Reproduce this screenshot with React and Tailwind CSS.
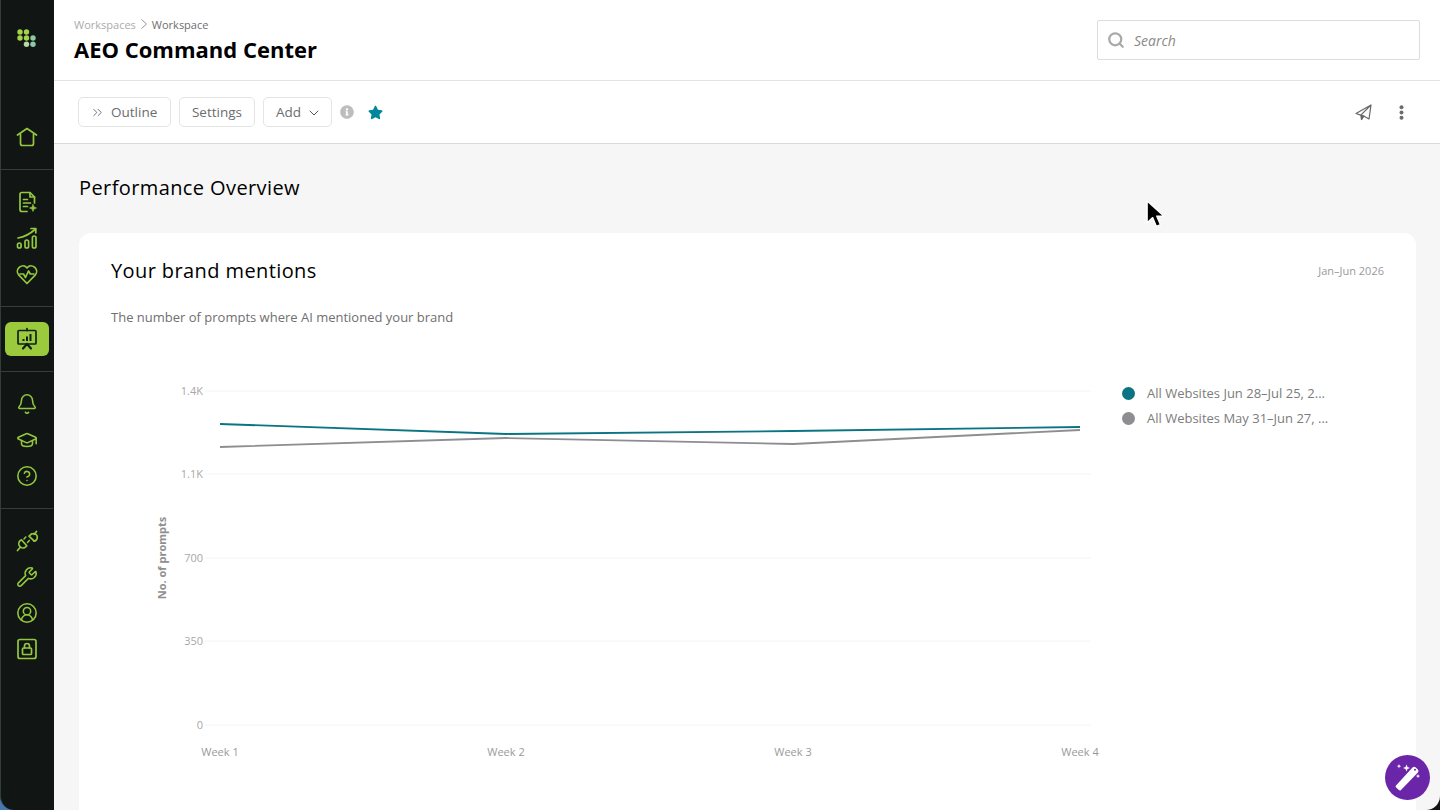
import React from 'react';
import {
  Bell,
  ChevronDown,
  ChevronsRight,
  CircleHelp,
  CircleUserRound,
  GraduationCap,
  Search,
  Wrench,
} from 'lucide-react';
import { FaInfoCircle, FaStar } from 'react-icons/fa';

const iconProps = { size: 22, strokeWidth: 1.7 };

function Glyph({ children, className = 'text-[#93c83e]' }) {
  return (
    <svg width="24" height="24" viewBox="0 0 24 24" fill="none" stroke="currentColor" strokeWidth="1.7" strokeLinecap="round" strokeLinejoin="round" className={className}>
      {children}
    </svg>
  );
}

function Logo() {
  const dots = [
    [5, 6, '#a6d14b'], [11.5, 6, '#a6d14b'],
    [5, 12, '#a6d14b'], [11.5, 12, '#a6d14b'], [18, 12, '#8ecaa0'],
    [11.5, 18.2, '#b5dca0'], [18, 18.2, '#8ecaa8'],
  ];
  return (
    <svg width="24" height="24" viewBox="0 0 24 24">
      {dots.map(([cx, cy, fill], idx) => (
        <circle key={idx} cx={cx} cy={cy} r="2.7" fill={fill} />
      ))}
    </svg>
  );
}

const HomeIcon = () => (
  <Glyph>
    <path d="M2.5 10 12 3.5 21.5 10" />
    <path d="M5.5 9v9.5a2 2 0 0 0 2 2h9a2 2 0 0 0 2-2V9" />
  </Glyph>
);

const ReportIcon = () => (
  <Glyph>
    <path d="M12 21.5H7a2 2 0 0 1-2-2v-15a2 2 0 0 1 2-2h8l4.5 4.5V13" />
    <path d="M15 2.5V7h4.5" />
    <path d="M8.5 9.5h4M8.5 13h7M8.5 16.5h4" />
    <path d="M18 14.5l1 2.5 2.5 1-2.5 1-1 2.5-1-2.5-2.5-1 2.5-1z" fill="currentColor" strokeWidth="0.6" />
  </Glyph>
);

const GrowthIcon = () => (
  <Glyph>
    <path d="M3 12c6-1 12-4 17.5-9" />
    <path d="M16 2.5h4.8v4.3" />
    <rect x="2.5" y="17" width="3.6" height="5" rx="1.8" />
    <rect x="10" y="14" width="3.6" height="8" rx="1.8" />
    <rect x="17.4" y="10" width="3.6" height="12" rx="1.8" />
  </Glyph>
);

const HeartIcon = () => (
  <Glyph>
    <path d="M12 21.5 3.6 12.8a5.4 5.4 0 0 1 7.6-7.6l.8.8.8-.8a5.4 5.4 0 0 1 7.6 7.6z" />
    <path d="M5 12h3.5l2 3.5 3-6.5 1.8 3H19" />
  </Glyph>
);

const BoardIcon = () => (
  <Glyph className="text-[#10201a]">
    <path d="M12 1.5v2" />
    <rect x="3" y="3.5" width="18" height="13.5" rx="1" />
    <path d="M12 17l-4 4.5M12 17l4 4.5" strokeWidth="2.2" />
    <path d="M8.5 14v-2M12 14V9.5M15.5 14V7" strokeWidth="2" strokeLinecap="butt" />
  </Glyph>
);

const PlugIcon = () => (
  <Glyph>
    <path d="M5.2 11.6a3.8 3.8 0 0 0 5.6 6.2l1-1.1-5.4-5.9z" />
    <path d="M18.8 12.2a3.8 3.8 0 0 0-.6-7.6 3.8 3.8 0 0 0-2.8 1.2l-1.4 1.3 5.3 5z" />
    <path d="M2.5 21.5l2.8-3.2M21.5 2.5l-2.4 2.8" />
    <path d="M9 10l1.8-2M12.5 13.4l1.8-2" strokeWidth="1.5" />
  </Glyph>
);

const LockIcon = () => (
  <Glyph>
    <rect x="3" y="2.5" width="18" height="19" rx="2" />
    <rect x="7.5" y="11" width="9" height="6.5" rx="1" />
    <path d="M9.5 11V9a2.5 2.5 0 0 1 5 0v2" />
  </Glyph>
);

function NavGroup({ children }) {
  return <div className="py-[14px] border-b border-[#343e3c]">{children}</div>;
}

function NavItem({ children, active }) {
  return (
    <div className="h-9 flex items-center justify-center text-[#93c83e]">
      {active ? (
        <div className="w-11 h-[34px] rounded-md bg-[#9bcb3c] flex items-center justify-center">{children}</div>
      ) : (
        children
      )}
    </div>
  );
}

function Sidebar() {
  return (
    <aside className="w-[54px] shrink-0 h-full bg-[#111614] border-l border-[#333c3c] pr-px rounded-bl-[14px]">
      <div className="pt-5 pb-[14px] border-b border-[#343e3c]">
        <NavItem><Logo /></NavItem>
        <div className="mt-[63px]">
          <NavItem><HomeIcon /></NavItem>
        </div>
      </div>
      <NavGroup>
        <NavItem><ReportIcon /></NavItem>
        <NavItem><GrowthIcon /></NavItem>
        <NavItem><HeartIcon /></NavItem>
      </NavGroup>
      <NavGroup>
        <NavItem active><BoardIcon /></NavItem>
      </NavGroup>
      <NavGroup>
        <NavItem><Bell {...iconProps} /></NavItem>
        <NavItem><GraduationCap {...iconProps} /></NavItem>
        <NavItem><CircleHelp {...iconProps} /></NavItem>
      </NavGroup>
      <div className="pt-[14px]">
        <NavItem><PlugIcon /></NavItem>
        <NavItem><Wrench {...iconProps} /></NavItem>
        <NavItem><CircleUserRound {...iconProps} /></NavItem>
        <NavItem><LockIcon /></NavItem>
      </div>
    </aside>
  );
}

function Button({ children, className = '' }) {
  return (
    <button className={`h-[30px] pt-px rounded-[5px] border border-[#e3e4e4] bg-white flex items-center text-[13.5px] font-medium text-[#6a6d6d] ${className}`}>
      {children}
    </button>
  );
}

function Header() {
  return (
    <>
      <header className="h-[81px] shrink-0 bg-white border-b border-[#e2e3e3] pl-5 pr-5 flex items-center justify-between">
        <div>
          <div className="flex items-center text-[11px] leading-[15px] text-[#ababab]">
            Workspaces
            <svg width="10" height="10" viewBox="0 0 10 10" fill="none" stroke="#8a8a8a" strokeWidth="0.9" className="mx-[3px]">
              <path d="M2.5 0.5 7.5 5l-5 4.5" />
            </svg>
            <span className="text-[#6e6e6e]">Workspace</span>
          </div>
          <h1 className="mt-[2px] text-[22px] leading-[30px] font-bold text-black">AEO Command Center</h1>
        </div>
        <div className="w-[323px] h-10 border border-[#dcdddd] rounded-[2px] flex items-center pl-[9px]">
          <Search size={18} strokeWidth={3} className="text-[#a9a9a9]" />
          <span className="ml-[9px] text-[14px] italic text-[#8a8a8a]">Search</span>
        </div>
      </header>
      <div className="h-[63px] shrink-0 bg-white border-b border-[#d9dada] pl-6 pr-9 flex items-center justify-between">
        <div className="flex items-center">
          <Button className="w-[93px] pl-[11px]">
            <ChevronsRight size={15} strokeWidth={1.3} className="text-[#555]" />
            <span className="ml-[6px]">Outline</span>
          </Button>
          <Button className="w-[76px] ml-2 justify-center">Settings</Button>
          <Button className="w-[69px] ml-2 pl-3">
            Add
            <ChevronDown size={16} strokeWidth={1.5} className="ml-[5px] text-[#555]" />
          </Button>
          <FaInfoCircle size={14} className="ml-2 text-[#bdbdbd]" />
          <FaStar size={15} className="ml-[14px] text-[#00879c]" />
        </div>
        <div className="flex items-center">
          <svg width="17" height="17" viewBox="0 0 17 17" fill="none" stroke="#666969" strokeWidth="1.2" strokeLinejoin="round">
            <path d="M16 1 1 9.5l4.8 1.6L16 1l-2 14-5.2-3-2.3 3.5-.7-4.4" />
            <path d="M6.5 15.5 8.8 12 5.8 11.1" fill="#666969" />
          </svg>
          <svg width="5" height="15" viewBox="0 0 5 15" fill="#6b6e6e" className="ml-[27px]">
            <circle cx="2.5" cy="2.2" r="2" />
            <circle cx="2.5" cy="7.5" r="2" />
            <circle cx="2.5" cy="12.8" r="2" />
          </svg>
        </div>
      </div>
    </>
  );
}

function Chart() {
  const yTicks = [
    ['1.4K', 31],
    ['1.1K', 114],
    ['700', 198],
    ['350', 281],
    ['0', 365],
  ];
  const xTicks = [
    ['Week 1', 109],
    ['Week 2', 395],
    ['Week 3', 682],
    ['Week 4', 969],
  ];
  return (
    <svg width="1000" height="440" viewBox="0 0 1000 440" className="shrink-0">
      {yTicks.map(([label, y]) => (
        <g key={label}>
          <line x1="94" x2="980" y1={y} y2={y} stroke="#f3f4f6" />
          <text x="92" y={y + 4} textAnchor="end" className="fill-[#a8a8a8] text-[11px]">{label}</text>
        </g>
      ))}
      <text transform="translate(55,198) rotate(-90)" textAnchor="middle" className="fill-[#8f8f8f] text-[11px] font-bold">No. of prompts</text>
      <polyline points="109,87 395,78 682,84 969,70" fill="none" stroke="#8e8e92" strokeWidth="1.8" />
      <polyline points="109,64 395,74 682,71 969,67" fill="none" stroke="#0a7482" strokeWidth="1.8" />
      {xTicks.map(([label, x]) => (
        <text key={label} x={x} y="396" textAnchor="middle" className="fill-[#9a9a9a] text-[11px]">{label}</text>
      ))}
    </svg>
  );
}

function Legend() {
  const items = [
    ['All Websites Jun 28–Jul 25, 2...', 'bg-[#0a7482]'],
    ['All Websites May 31–Jun 27, ...', 'bg-[#8e8e92]'],
  ];
  return (
    <div className="ml-[11px] pt-[21px]">
      {items.map(([label, dot]) => (
        <div key={label} className="h-[25px] flex items-center">
          <span className={`w-[13px] h-[13px] rounded-full ${dot}`} />
          <span className="ml-3 text-[13px] text-[#7c7c7c] whitespace-nowrap">{label}</span>
        </div>
      ))}
    </div>
  );
}

function Cursor() {
  return (
    <svg width="20" height="31" viewBox="0 0 18 28" className="absolute left-[1092px] top-[200px]">
      <path d="M1 1v19.5l5-4.6 3.4 8 3.6-1.6-3.4-7.8H16z" fill="#000" stroke="#fff" strokeWidth="1.2" strokeLinejoin="round" />
    </svg>
  );
}

function MagicButton() {
  return (
    <button className="absolute right-[10px] bottom-[10px] w-[45px] h-[45px] rounded-full bg-[#6b25a8] flex items-center justify-center">
      <svg width="45" height="45" viewBox="0 0 45 45" fill="#fff">
        <path d="M11 30.5 27.5 12.5a2.2 2.2 0 0 1 3-.2l2.3 2.1a2.2 2.2 0 0 1 .1 3L16 35a1.5 1.5 0 0 1-2.1.1l-2.8-2.5a1.5 1.5 0 0 1-.1-2.1z" />
        <circle cx="30" cy="14.8" r="1" fill="#6b25a8" />
        <path d="M14 9l.6 1.6 1.6.6-1.6.6-.6 1.6-.6-1.6-1.6-.6 1.6-.6z" />
        <path d="M21.5 9.5l1 2.5 2.5 1-2.5 1-1 2.5-1-2.5-2.5-1 2.5-1z" />
        <path d="M33 19l.6 1.5 1.5.6-1.5.6-.6 1.5-.6-1.5-1.5-.6 1.5-.6z" />
      </svg>
    </button>
  );
}

export default function App() {
  return (
    <div className="w-[1440px] h-[810px] overflow-hidden flex font-['Open_Sans',sans-serif] bg-[linear-gradient(to_right,#4a76ae_50%,#141414_50%)]">
      <Sidebar />
      <main className="relative flex-1 h-full flex flex-col bg-[#f6f6f6] rounded-br-[14px] overflow-hidden">
        <Header />
        <div className="flex-1 min-h-0 pl-[25px] pr-6 overflow-hidden">
          <h2 className="pt-[29px] text-[20px] leading-[30px] font-medium tracking-[0.4px] text-black">Performance Overview</h2>
          <section className="mt-[30px] bg-white rounded-xl px-8 pt-[23px] h-[640px]">
            <div className="flex items-center justify-between">
              <h3 className="text-[20px] leading-[30px] font-medium tracking-[0.4px] text-black">Your brand mentions</h3>
              <span className="text-[11px] text-[#9a9a9a]">Jan–Jun 2026</span>
            </div>
            <p className="mt-[22px] text-[13px] leading-[18px] text-[#6f6f6f]">The number of prompts where AI mentioned your brand</p>
            <div className="flex mt-[34px] items-start">
              <Chart />
              <Legend />
            </div>
          </section>
        </div>
        <Cursor />
        <MagicButton />
      </main>
    </div>
  );
}
